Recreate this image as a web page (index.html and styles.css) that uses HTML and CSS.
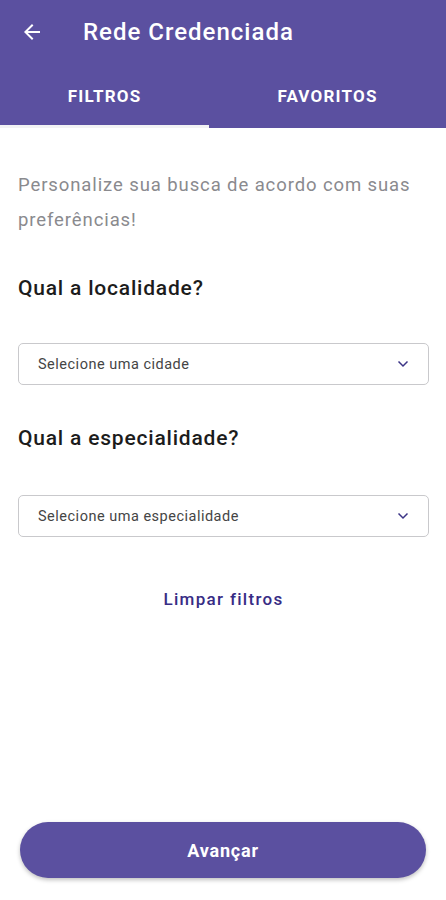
FILE: index.html
```html
<!DOCTYPE html>
<html lang="pt-BR">
<head>
  <meta charset="UTF-8">
  <title>Rede Credenciada</title>
  <link rel="stylesheet" href="styles.css">
</head>
<body>

  <div class="page">
    <header class="appbar">
      <div class="toolbar">
        <svg class="back" viewBox="0 0 24 24" width="24" height="24">
          <path d="M20 11H7.83l5.59-5.59L12 4l-8 8 8 8 1.41-1.41L7.83 13H20v-2z" fill="#fff"/>
        </svg>
        <h1>Rede Credenciada</h1>
      </div>
      <nav class="tabs">
        <div class="tab active">FILTROS</div>
        <div class="tab">FAVORITOS</div>
      </nav>
    </header>

    <main class="content">
      <p class="intro">Personalize sua busca de acordo com suas preferências!</p>

      <h2>Qual a localidade?</h2>
      <div class="select">
        <span>Selecione uma cidade</span>
        <svg viewBox="0 0 12 8" width="12" height="8"><path d="M1.5 1.5 6 6l4.5-4.5" fill="none" stroke="#3b3486" stroke-width="1.5"/></svg>
      </div>

      <h2>Qual a especialidade?</h2>
      <div class="select">
        <span>Selecione uma especialidade</span>
        <svg viewBox="0 0 12 8" width="12" height="8"><path d="M1.5 1.5 6 6l4.5-4.5" fill="none" stroke="#3b3486" stroke-width="1.5"/></svg>
      </div>

      <a class="clear" href="#">Limpar filtros</a>
    </main>

    <div class="footer">
      <button>Avançar</button>
    </div>
  </div>

</body>
</html>
```

FILE: styles.css
```css
* { box-sizing: border-box; }
body { margin: 0; font-family: Roboto, "Noto Sans", sans-serif; background: #fff; }
.page { min-height: 100vh; display: flex; flex-direction: column; }

.appbar { background: #5b50a0; color: #fff; }
.toolbar { height: 64px; display: flex; align-items: center; padding-left: 20px; }
.back { flex: none; }
.toolbar h1 { margin: 0 0 0 39px; font-size: 24px; font-weight: 500; letter-spacing: 1px; }
.tabs { display: grid; grid-template-columns: 209px 1fr; height: 64px; }
.tab { display: flex; align-items: center; justify-content: center; font-size: 17px; font-weight: 700; letter-spacing: 1.2px; padding-bottom: 1px; }
.tab.active { box-shadow: inset 0 -3px 0 #f2f2f4; }

.content { padding: 40px 17px 0 18px; display: flex; flex-direction: column; }
.intro { margin: 0; font-size: 18.5px; line-height: 35px; color: #8a8a8e; letter-spacing: 0.9px; }
h2 { margin: 37px 0 0; font-size: 21px; line-height: 26px; font-weight: 500; color: #1c1c1c; letter-spacing: 0.8px; }
.select { margin-top: 42px; height: 42px; border: 1px solid #c9c9cc; border-radius: 5px; display: flex; align-items: center; justify-content: space-between; padding: 0 19px 0 19px; font-size: 14.5px; letter-spacing: 0.5px; color: #454545; }
.select + h2 { margin-top: 40px; }
.select + h2 + .select { margin-top: 44px; }
.clear { align-self: center; margin-top: 52px; line-height: 20px; font-size: 17px; font-weight: 500; color: #372c85; letter-spacing: 1.3px; text-decoration: none; }

.footer { margin-top: auto; padding: 0 20px 22px; }
.footer button { width: 100%; height: 56px; border: none; border-radius: 28px; background: #5b50a0; color: #fff; font-family: inherit; font-size: 18px; font-weight: 700; letter-spacing: 0.8px; box-shadow: 0 2px 4px rgba(0,0,0,0.25); }
```
